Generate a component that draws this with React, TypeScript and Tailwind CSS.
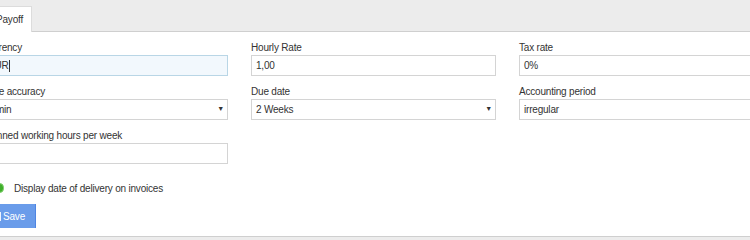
import React from "react";

const font = { fontFamily: '"Liberation Sans", Arial, sans-serif' };

function Label({ children }: { children: React.ReactNode }) {
  return <div className="text-[10px] tracking-[-0.2px] leading-[13px] text-[#333] mb-[1px]">{children}</div>;
}

function TextInput({ value, focused }: { value: string; focused?: boolean }) {
  return (
    <div
      className={
        "h-[21px] border px-[4px] flex items-center text-[10px] tracking-[-0.2px] text-[#333] " +
        (focused ? "bg-[#f2f8fd] border-[#b9d6e6]" : "bg-white border-[#d4d4d4]")
      }
    >
      {value}
      {focused && <span className="inline-block w-px h-[12px] bg-[#333]" />}
    </div>
  );
}

function SelectBox({ value }: { value: string }) {
  return (
    <div className="h-[21px] border border-[#d4d4d4] bg-white px-[4px] flex items-center justify-between text-[10px] tracking-[-0.2px] text-[#333]">
      <span>{value}</span>
      <span className="text-[7px] mr-[-1px]">▼</span>
    </div>
  );
}

export default function App() {
  return (
    <div className="w-[750px] h-[240px] overflow-hidden bg-white relative" style={font}>
      <div className="h-[32px] bg-[#ececec] border-b border-[#cfcfcf] flex items-end">
        <div className="ml-[-12px] h-[26px] mb-[-1px] bg-white border-r border-t border-[#dcdcdc] px-[8px] flex items-center text-[10px] tracking-[-0.2px] text-[#333]">
          Payoff
        </div>
      </div>
      <div className="ml-[-17px] w-[800px] pt-[9px]">
        <div className="grid grid-cols-[245px_245px_245px] gap-x-[23px] gap-y-[8px]">
          <div>
            <Label>Currency</Label>
            <TextInput value="EUR" focused />
          </div>
          <div>
            <Label>Hourly Rate</Label>
            <TextInput value="1,00" />
          </div>
          <div>
            <Label>Tax rate</Label>
            <TextInput value="0%" />
          </div>
          <div className="mt-[1px]">
            <Label>Time accuracy</Label>
            <SelectBox value="1 min" />
          </div>
          <div className="mt-[1px]">
            <Label>Due date</Label>
            <SelectBox value="2 Weeks" />
          </div>
          <div className="mt-[1px]">
            <Label>Accounting period</Label>
            <TextInput value="irregular" />
          </div>
          <div className="mt-[1px]">
            <Label>Planned working hours per week</Label>
            <TextInput value="" />
          </div>
        </div>
        <div className="flex items-center mt-[18px] h-[12px]">
          <div className="ml-[12px] w-[9px] h-[10px] rounded-full bg-[#3fae2a] border border-[#7ccf6a]" />
          <span className="ml-[10px] text-[10px] tracking-[-0.2px] text-[#333]">Display date of delivery on invoices</span>
        </div>
        <div className="mt-[10px] ml-[1px] inline-flex items-center h-[24px] bg-[#6a9cea] border-r border-[#4f85e2] pl-[8px] pr-[10px] text-[10px] tracking-[-0.2px] text-white">
          <span className="inline-block w-[9px] h-[9px] bg-[#eef3fd] mr-[2px]" />
          Save
        </div>
      </div>
      <div className="absolute left-0 right-0 top-[236px] h-[4px] bg-[#ececec] border-t border-[#cfcfcf]" />
    </div>
  );
}
